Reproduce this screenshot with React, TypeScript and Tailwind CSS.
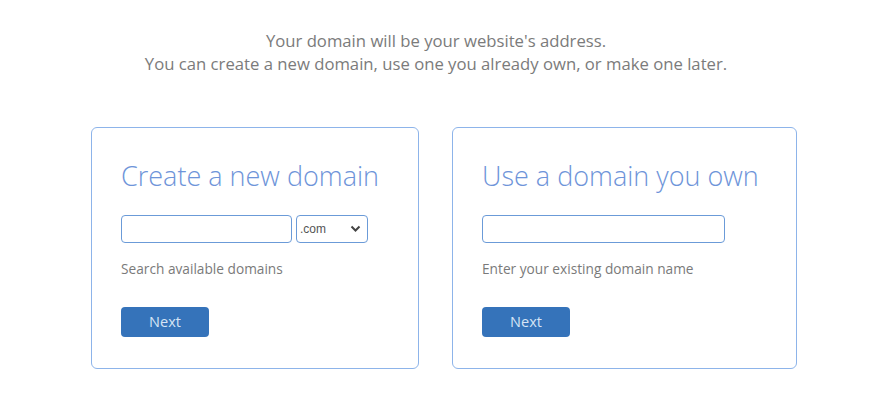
import React from 'react';

const font = { fontFamily: '"Open Sans", "Noto Sans", sans-serif' };

const NextButton: React.FC = () => (
  <button className="w-[88px] h-[30px] rounded-[4px] bg-[#3573ba] text-[14.5px] text-[#d6e4f5]">Next</button>
);

const DomainCard: React.FC<{ title: string; hint: string; width: string; children: React.ReactNode }> = ({
  title,
  hint,
  width,
  children,
}) => (
  <div className={`${width} border border-[#8db4ea] rounded-[6px] pl-[29px] pt-[29px] pb-[31px] bg-white`}>
    <h2 className="text-[27px] font-light leading-[38px] text-[#6e94d9]">{title}</h2>
    <div className="mt-[20px] flex gap-[4px]">{children}</div>
    <p className="mt-[17px] text-[13.7px] leading-[18px] text-[#7a7a7a]">{hint}</p>
    <div className="mt-[29px]">
      <NextButton />
    </div>
  </div>
);

export default function App() {
  return (
    <div className="w-[882px] h-[412px] bg-white" style={font}>
      <div className="pt-[29px] text-center text-[16.7px] leading-[23px] text-[#7b7b7b] pr-[10px]">
        <p>Your domain will be your website's address.</p>
        <p>You can create a new domain, use one you already own, or make one later.</p>
      </div>
      <div className="mt-[52px] flex justify-center gap-[33px] pl-[6px]">
        <DomainCard title="Create a new domain" hint="Search available domains" width="w-[328px]">
          <input
            type="text"
            className="w-[171px] h-[28px] rounded-[4px] border-[1.5px] border-[#6b9bd8] outline-none"
          />
          <div className="relative w-[72px] h-[28px] rounded-[4px] border-[1.5px] border-[#6b9bd8] flex items-center pl-[3px]">
            <span className="text-[12px] text-[#555]" style={{ fontFamily: '"Liberation Sans", Arial, sans-serif' }}>
              .com
            </span>
            <svg className="absolute right-[6px] top-[9px]" width="11" height="8" viewBox="0 0 11 8">
              <path d="M1.5 1.5 L5.5 5.5 L9.5 1.5" fill="none" stroke="#444" strokeWidth="2" />
            </svg>
          </div>
        </DomainCard>
        <DomainCard title="Use a domain you own" hint="Enter your existing domain name" width="w-[345px]">
          <input
            type="text"
            className="w-[243px] h-[28px] rounded-[4px] border-[1.5px] border-[#6b9bd8] outline-none"
          />
        </DomainCard>
      </div>
    </div>
  );
}
